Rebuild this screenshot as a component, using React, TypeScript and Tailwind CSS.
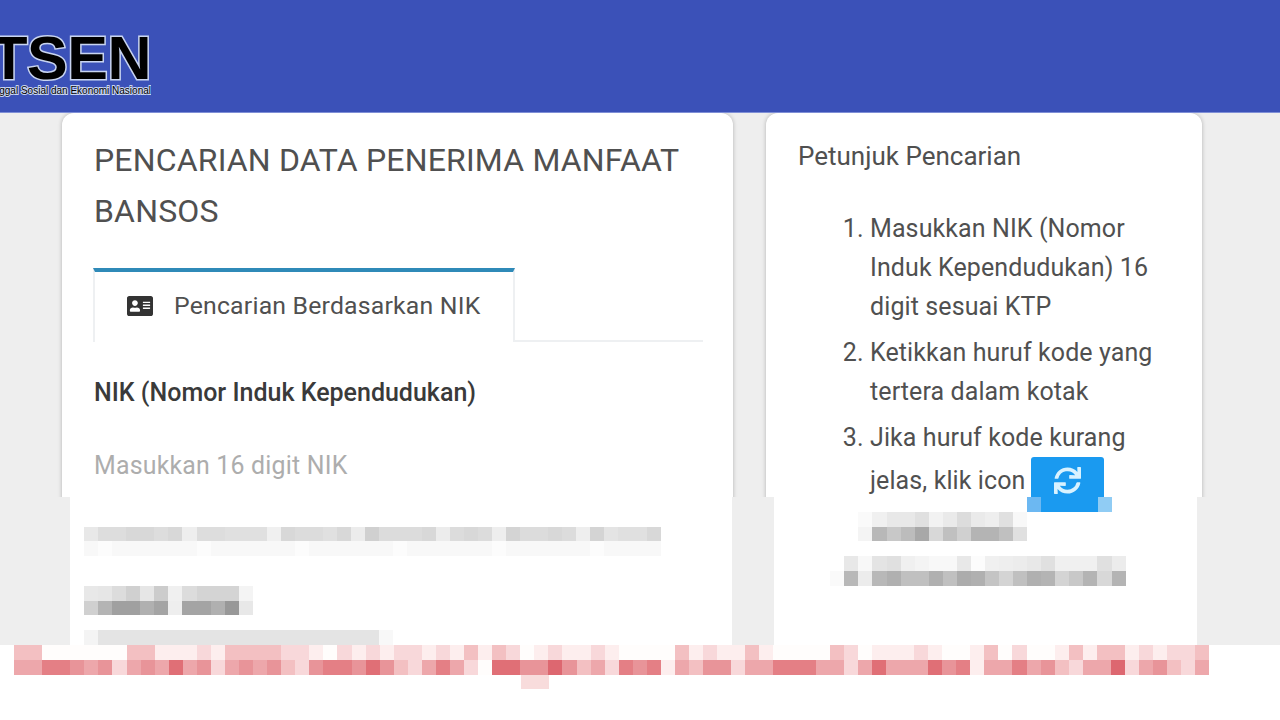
import { FaAddressCard, FaSync } from 'react-icons/fa';

const redLevels = ['#fffdfc', '#fdeeee', '#f8d8da', '#f3c0c2', '#eda7ab', '#e89499', '#e47f85', '#e06f76', '#dd6770'];

const redTop =
  '33000000' + '33' + '111' + '2' + '1' + '3333' + '22' + '1' + '0' + '212122' +
  '1213132012' + '1121000031' + '2113100003' +
  '2011121001' + '3020013133' + '121223';
const redBottom =
  '44665452' + '4547452' + '454532' + '56657532' +
  '4642077558' + '5342656143' + '5524466644' +
  '2474447561' + '4464532448' + '245324';

const grayBlocks: Record<string, string[]> = {
  leftA: 'e8 dd dd d8 d8 dd d8 ee dd dd e0 e0 e0 f0 d8 dc dc e0 d8 ec d0 dc dc dc d8 ec dc d8 dc ee d4 dc dc d8 dc ee d4 e4 e0 e0 d8'.split(' '),
  leftB: Array.from({ length: 41 }, (_, i) => (i % 7 === 1 ? 'fc' : 'f8')),
  nameA: 'e8 e6 dc d0 e6 cc f0 dc d4 d4 d4 f4'.split(' '),
  nameB: 'd0 b4 a0 a0 b0 a4 ee a4 a4 b0 98 e8'.split(' '),
  field: ['f4', ...Array.from({ length: 20 }, () => 'e4'), 'f8'],
  rightA: 'fa f0 e8 e8 e0 f2 ea dc ea ee e0 f8'.split(' '),
  rightB: 'f4 b8 c8 bc a8 d8 c0 d0 b4 b4 c0 e0'.split(' '),
  rightC: 'e8 f8 e4 e0 f0 f4 f8 f8 e8 fc f0 ee ec e8 e0 f0 f0 f0 e0 ec'.split(' '),
  rightD: 'fa b8 ec b8 b0 c0 c0 b0 c0 ac b0 c4 d4 c0 b0 b4 d4 c8 b4 d8 b4'.split(' '),
};

function PixelRow({ cells, offset = 0 }: { cells: string[]; offset?: number }) {
  return (
    <div className="flex h-[14.8px]" style={{ paddingLeft: offset * 14.07 }}>
      {cells.map((c, i) => (
        <span key={i} className="h-full w-[14.07px] shrink-0" style={{ backgroundColor: c }} />
      ))}
    </div>
  );
}

const gray = (vals: string[]) => vals.map((v) => `#${v}${v}${v}`);
const red = (s: string) => s.split('').map((d) => redLevels[Number(d)]);

export default function App() {
  return (
    <div className="w-[1280px] h-[720px] overflow-hidden bg-white text-[#505050]" style={{ fontFamily: 'Roboto, sans-serif' }}>
      {/* header */}
      <div className="h-[113px] bg-[#3b51b8] border-b border-[#7f8fd6] flex items-start">
        <div className="w-[151px] overflow-hidden flex flex-col items-end whitespace-nowrap pt-[28px]" style={{ fontFamily: '"Liberation Sans", sans-serif' }}>
          <div className="text-[61px] leading-[60px] font-bold text-black tracking-[-0.5px] [-webkit-text-stroke:3px_#c8d4f0] [paint-order:stroke_fill]">TSEN</div>
          <div className="text-[10px] leading-[12px] mt-[-3px] text-black [-webkit-text-stroke:2px_#c8d4f0] [paint-order:stroke_fill]">Data Tunggal Sosial dan Ekonomi Nasional</div>
        </div>
      </div>

      {/* visible cards */}
      <div className="h-[384px] overflow-hidden bg-[#eeeeee] flex pl-[62px] gap-[33px]">
        <div className="w-[671px] h-[420px] bg-white rounded-t-[12px] shadow-[0_0_4px_rgba(0,0,0,0.25)] pl-[31px] pr-[30px] pt-[22px]">
          <h1 className="ml-px text-[32px] leading-[51px] font-normal tracking-[0.17px]">
            PENCARIAN DATA PENERIMA MANFAAT
            <br />
            BANSOS
          </h1>
          <div className="mt-[31px] flex border-b-2 border-[#eef0f2] h-[74px]">
            <div className="w-[422px] h-[74px] border-t-4 border-t-[#2f8ab8] border-x-2 border-x-[#eef0f2] bg-white flex items-center pl-[32px] pb-[2px]">
              <FaAddressCard className="text-[#333] text-[26px]" />
              <span className="ml-[21px] text-[24.8px] tracking-[0.2px]">Pencarian Berdasarkan NIK</span>
            </div>
          </div>
          <div className="ml-px mt-[33px] text-[25px] leading-[36px] font-medium text-[#3a3a3a]">NIK (Nomor Induk Kependudukan)</div>
          <div className="ml-px mt-[37px] text-[24.9px] leading-[36px] text-[#adadad] tracking-[0.2px]">Masukkan 16 digit NIK</div>
        </div>

        <div className="w-[436px] h-[420px] bg-white rounded-t-[12px] shadow-[0_0_4px_rgba(0,0,0,0.25)] pl-[32px] pt-[24px]">
          <h2 className="text-[26px] leading-[38px] font-normal">Petunjuk Pencarian</h2>
          <ol className="mt-[34px] list-decimal pl-[72px] pr-[40px] text-[25px] leading-[39px] tracking-[0.1px] space-y-[7px]">
            <li>Masukkan NIK (Nomor Induk Kependudukan) 16 digit sesuai KTP</li>
            <li>Ketikkan huruf kode yang tertera dalam kotak</li>
            <li>
              Jika huruf kode kurang jelas, klik icon
              <span className="inline-flex align-middle ml-[6px] w-[73px] h-[50px] rounded-[3px] bg-[#1a9af0] justify-center pt-[10px]">
                <FaSync className="text-[#d8f2ff] text-[27px]" />
              </span>
            </li>
          </ol>
        </div>
      </div>

      {/* pixelated part */}
      <div className="h-[148px] overflow-hidden bg-[#eeeeee] flex">
        <div className="ml-[70px] w-[662px] bg-white pl-[14px]">
          <div className="h-[29.6px]" />
          <PixelRow cells={gray(grayBlocks.leftA)} />
          <PixelRow cells={gray(grayBlocks.leftB)} />
          <div className="h-[29.6px]" />
          <PixelRow cells={gray(grayBlocks.nameA)} />
          <PixelRow cells={gray(grayBlocks.nameB)} />
          <div className="h-[14.8px]" />
          <PixelRow cells={gray(grayBlocks.field)} />
        </div>
        <div className="ml-[42px] w-[423px] bg-white">
          <PixelRow offset={18} cells={['#6cb8f2', '#1a9af0', '#1a9af0', '#1a9af0', '#1a9af0', '#90ccf4']} />
          <PixelRow offset={6} cells={gray(grayBlocks.rightA)} />
          <PixelRow offset={6} cells={gray(grayBlocks.rightB)} />
          <div className="h-[14.8px]" />
          <PixelRow offset={5} cells={gray(grayBlocks.rightC)} />
          <PixelRow offset={4} cells={gray(grayBlocks.rightD)} />
        </div>
      </div>

      {/* warning line */}
      <div className="h-[75px] bg-white pl-[14px]">
        <PixelRow cells={red(redTop)} />
        <PixelRow cells={red(redBottom)} />
        <PixelRow offset={36} cells={['#f8dcdc', '#f8dcdc']} />
      </div>
    </div>
  );
}
